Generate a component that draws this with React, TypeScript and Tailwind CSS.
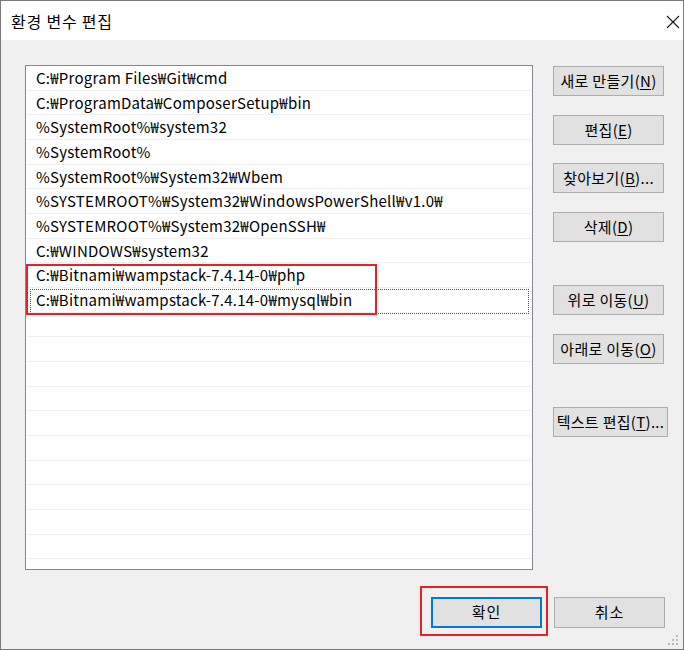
const entries = [
  "C:₩Program Files₩Git₩cmd",
  "C:₩ProgramData₩ComposerSetup₩bin",
  "%SystemRoot%₩system32",
  "%SystemRoot%",
  "%SystemRoot%₩System32₩Wbem",
  "%SYSTEMROOT%₩System32₩WindowsPowerShell₩v1.0₩",
  "%SYSTEMROOT%₩System32₩OpenSSH₩",
  "C:₩WINDOWS₩system32",
  "C:₩Bitnami₩wampstack-7.4.14-0₩php",
  "C:₩Bitnami₩wampstack-7.4.14-0₩mysql₩bin",
]

const rows = [...entries, ...Array(10).fill("")]

const Btn = ({ label, hot, rest, className }: { label: string; hot: string; rest?: string; className?: string }) => (
  <button className={"h-[30px] w-[111px] border border-[#adadad] bg-[#e1e1e1] text-[15px] tracking-[0.3px] text-black flex items-center justify-center whitespace-nowrap " + (className || "")}>
    {label}(<span className="underline underline-offset-2">{hot}</span>){rest}
  </button>
)

export default function App() {
  return (
    <div className="w-[684px] h-[650px] border border-[#7a7a7a] bg-[#f0f0f0] flex flex-col font-['Noto_Sans_CJK_KR',sans-serif] text-black">
      {/* title bar */}
      <div className="h-[39px] bg-white flex items-center justify-between pl-[10px] pr-[3px] shrink-0">
        <span className="text-[16px] tracking-[0.8px]">환경 변수 편집</span>
        <svg width="14" height="14" viewBox="0 0 14 14" className="mt-[2px]">
          <path d="M1 1 L13 13 M13 1 L1 13" stroke="#1a1a1a" strokeWidth="1.1" />
        </svg>
      </div>

      <div className="flex pl-[24px] pt-[25px]">
        {/* list */}
        <div className="relative w-[508px] h-[505px] border border-[#828790] bg-white overflow-hidden">
          {rows.map((r, i) => (
            <div key={i} className="h-[24.68px] mx-[1px] border-b border-[#f0f0f0] pl-[9px] text-[15px] tracking-[0.25px] leading-[24px] whitespace-nowrap">
              {r}
            </div>
          ))}
          <div className="absolute left-[4px] top-[223px] w-[499px] h-[25px] border border-dotted border-[#555]" />
          <div className="absolute left-0 top-[198px] w-[351px] h-[51px] border-2 border-[#e8202a]" />
        </div>

        {/* side buttons */}
        <div className="flex flex-col ml-[20px] pt-[1px]">
          <Btn label="새로 만들기" hot="N" />
          <Btn label="편집" hot="E" className="mt-[19px]" />
          <Btn label="찾아보기" hot="B" rest="..." className="mt-[18px]" />
          <Btn label="삭제" hot="D" className="mt-[19px]" />
          <Btn label="위로 이동" hot="U" className="mt-[43px]" />
          <Btn label="아래로 이동" hot="O" className="mt-[19px]" />
          <Btn label="텍스트 편집" hot="T" rest="..." className="mt-[43px] w-[115px]" />
        </div>
      </div>

      {/* bottom buttons */}
      <div className="flex justify-end pr-[18px] mt-[27px] gap-[12px]">
        <div className="relative">
          <button className="h-[31px] w-[111px] border-2 border-[#0078d7] bg-[#e1e1e1] text-[15px] tracking-[1px]">확인</button>
          <div className="absolute -left-[11px] -top-[11px] w-[128px] h-[50px] border-2 border-[#e8202a]" />
        </div>
        <button className="h-[31px] w-[111px] border border-[#adadad] bg-[#e1e1e1] text-[15px] tracking-[1px]">취소</button>
      </div>

      <div className="flex justify-end pr-[4px] mt-auto pb-[3px]">
        <svg width="12" height="12" viewBox="0 0 12 12">
          {[[9, 1], [9, 5], [5, 5], [9, 9], [5, 9], [1, 9]].map(([x, y], i) => (
            <rect key={i} x={x} y={y} width="2" height="2" fill="#b8b8b8" />
          ))}
        </svg>
      </div>
    </div>
  )
}
